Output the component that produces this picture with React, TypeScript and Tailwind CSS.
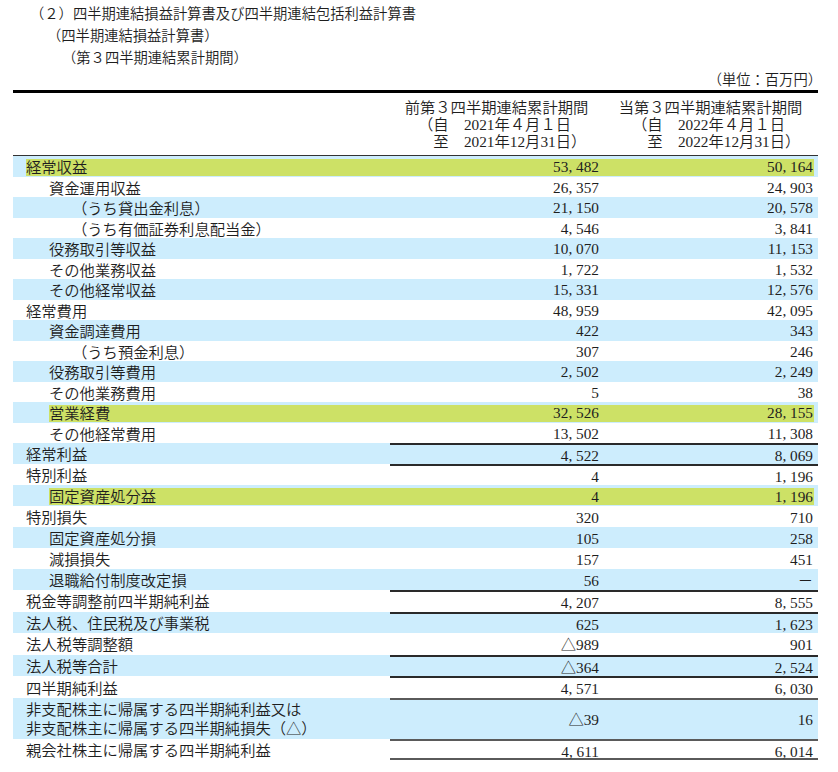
import React from "react";

type Row = {
  label: string;
  lv: number;
  a: string;
  b: string;
  hl?: boolean;
  top?: "k" | "g";
  bottom?: boolean;
  h: string;
};

const H1 = "h-[20.5px]";
const H2 = "h-[21px]";
const H3 = "h-[21.6px]";

const rows: Row[] = [
  { label: "経常収益", lv: 0, a: "53, 482", b: "50, 164", hl: true, h: H1 },
  { label: "資金運用収益", lv: 1, a: "26, 357", b: "24, 903", h: H1 },
  { label: "（うち貸出金利息）", lv: 2, a: "21, 150", b: "20, 578", h: H1 },
  { label: "（うち有価証券利息配当金）", lv: 2, a: "4, 546", b: "3, 841", h: H1 },
  { label: "役務取引等収益", lv: 1, a: "10, 070", b: "11, 153", h: H1 },
  { label: "その他業務収益", lv: 1, a: "1, 722", b: "1, 532", h: H1 },
  { label: "その他経常収益", lv: 1, a: "15, 331", b: "12, 576", h: H1 },
  { label: "経常費用", lv: 0, a: "48, 959", b: "42, 095", h: H1 },
  { label: "資金調達費用", lv: 1, a: "422", b: "343", h: H1 },
  { label: "（うち預金利息）", lv: 2, a: "307", b: "246", h: H1 },
  { label: "役務取引等費用", lv: 1, a: "2, 502", b: "2, 249", h: H1 },
  { label: "その他業務費用", lv: 1, a: "5", b: "38", h: H1 },
  { label: "営業経費", lv: 1, a: "32, 526", b: "28, 155", hl: true, h: H1 },
  { label: "その他経常費用", lv: 1, a: "13, 502", b: "11, 308", h: H1 },
  { label: "経常利益", lv: 0, a: "4, 522", b: "8, 069", top: "k", h: H2 },
  { label: "特別利益", lv: 0, a: "4", b: "1, 196", top: "k", h: H2 },
  { label: "固定資産処分益", lv: 1, a: "4", b: "1, 196", hl: true, h: H2 },
  { label: "特別損失", lv: 0, a: "320", b: "710", h: H2 },
  { label: "固定資産処分損", lv: 1, a: "105", b: "258", h: H2 },
  { label: "減損損失", lv: 1, a: "157", b: "451", h: H2 },
  { label: "退職給付制度改定損", lv: 1, a: "56", b: "－", h: H2 },
  { label: "税金等調整前四半期純利益", lv: 0, a: "4, 207", b: "8, 555", top: "k", h: H3 },
  { label: "法人税、住民税及び事業税", lv: 0, a: "625", b: "1, 623", top: "k", h: H3 },
  { label: "法人税等調整額", lv: 0, a: "△989", b: "901", h: H3 },
  { label: "法人税等合計", lv: 0, a: "△364", b: "2, 524", top: "k", h: H3 },
  { label: "四半期純利益", lv: 0, a: "4, 571", b: "6, 030", top: "k", h: H3 },
  {
    label: "非支配株主に帰属する四半期純利益又は\n非支配株主に帰属する四半期純損失（△）",
    lv: 0,
    a: "△39",
    b: "16",
    top: "g",
    h: "h-[41px]",
  },
  {
    label: "親会社株主に帰属する四半期純利益",
    lv: 0,
    a: "4, 611",
    b: "6, 014",
    top: "g",
    bottom: true,
    h: "h-[21px]",
  },
];

function indentClass(lv: number) {
  if (lv === 0) return "ml-[13px]";
  if (lv === 1) return "ml-[36px]";
  return "ml-[59px]";
}

function topClass(t?: "k" | "g") {
  if (t === "k") return "border-t-2 border-t-[#2a2a2a]";
  if (t === "g") return "border-t-2 border-t-[#5a5a5a]";
  return "";
}

export default function App() {
  return (
    <div className="w-[838px] h-[772px] overflow-hidden bg-white text-[#1e1e1e] font-['Liberation_Serif','Noto_Sans_CJK_JP',serif]">
      <div className="pt-[2px] text-[14.3px] leading-[22px] font-[350] font-['Noto_Sans_CJK_JP',sans-serif]">
        <div className="pl-[30px]">（２）四半期連結損益計算書及び四半期連結包括利益計算書</div>
        <div className="pl-[47px]">（四半期連結損益計算書）</div>
        <div className="pl-[62px]">（第３四半期連結累計期間）</div>
      </div>
      <div className="w-[822px] text-right text-[14.3px] leading-[22px] font-[350] font-['Noto_Sans_CJK_JP',sans-serif]">
        （単位：百万円）
      </div>
      <div className="ml-[13px] w-[805px] border-t-[3px] border-black">
        <div className="flex h-[63px] border-b border-[#333] text-[15.3px] leading-[17px] font-[350]">
          <div className="w-[377px]" />
          <div className="w-[213px] pt-[6px]">
            <div className="text-center">前第３四半期連結累計期間</div>
            <div className="pl-[28px]">（自　2021年４月１日</div>
            <div className="pl-[28px]">　至　2021年12月31日）</div>
          </div>
          <div className="w-[215px] pt-[6px]">
            <div className="text-center">当第３四半期連結累計期間</div>
            <div className="pl-[29px]">（自　2022年４月１日</div>
            <div className="pl-[29px]">　至　2022年12月31日）</div>
          </div>
        </div>
        {rows.map((r, i) => {
          const bg = i % 2 === 0 ? "bg-[#cdedfd]" : "bg-white";
          const g = r.hl ? "bg-[#cde166]" : "";
          const bt = topClass(r.top);
          const bb = r.bottom ? "border-b-2 border-b-[#5a5a5a]" : "";
          const two = r.label.includes("\n");
          return (
            <div key={i} className={`flex ${bg} ${r.h}`}>
              <div className={`w-[377px] flex flex-col ${two ? "pt-[1px]" : "pt-[3px]"} pb-[1px]`}>
                <div
                  className={`flex-1 flex items-center pb-[2px] whitespace-pre-line text-[15.3px] font-[350] ${two ? "leading-[19px]" : "leading-[15px]"} font-['Noto_Sans_CJK_JP',sans-serif] ${indentClass(r.lv)} ${g}`}
                >
                  {r.label}
                </div>
              </div>
              <div className={`w-[213px] flex flex-col pt-[3px] pb-[1px] ${bt} ${bb}`}>
                <div className={`flex-1 flex items-center justify-end pr-[4px] pb-[1px] text-[15.3px] leading-[15px] ${g}`}>
                  {r.a}
                </div>
              </div>
              <div className={`w-[215px] flex flex-col pt-[3px] pb-[1px] ${bt} ${bb}`}>
                <div
                  className={`flex-1 flex items-center justify-end mr-[4px] pr-[1px] pb-[1px] text-[15.3px] leading-[15px] ${g}`}
                >
                  {r.b}
                </div>
              </div>
            </div>
          );
        })}
      </div>
    </div>
  );
}
